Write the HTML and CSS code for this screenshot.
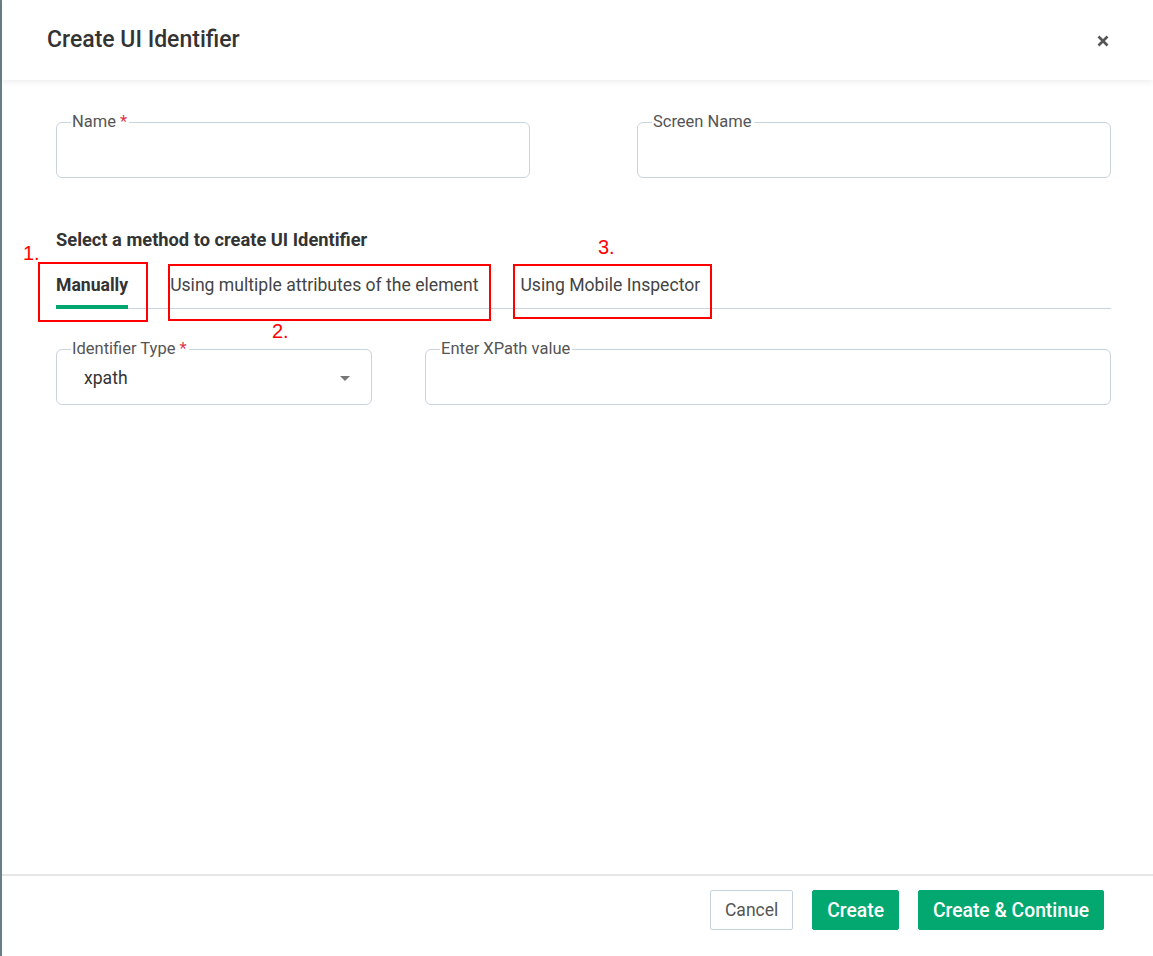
FILE: index.html
```html
<!DOCTYPE html>
<html lang="en">
<head>
<meta charset="utf-8">
<title>Create UI Identifier</title>
<link rel="stylesheet" href="styles.css">
</head>
<body>
<div class="page">
  <div class="edge"></div>
  <div class="dialog">
    <header class="dialog-header">
      <h1 class="dialog-title">Create UI Identifier</h1>
      <button class="close-btn" aria-label="Close">
        <svg width="12" height="12" viewBox="0 0 12 12"><path d="M1.5 1.5L10.5 10.5M10.5 1.5L1.5 10.5" stroke="#555" stroke-width="2.6" stroke-linecap="butt"/></svg>
      </button>
    </header>
    <main class="dialog-body">
      <div class="row row-top">
        <fieldset class="field">
          <legend class="field-label">Name <span class="req">*</span></legend>
          <div class="field-input"></div>
        </fieldset>
        <fieldset class="field">
          <legend class="field-label">Screen Name</legend>
          <div class="field-input"></div>
        </fieldset>
      </div>
      <h2 class="section-title">Select a method to create UI Identifier</h2>
      <nav class="tabs">
        <div class="tab tab-active">Manually</div>
        <div class="tab">Using multiple attributes of the element</div>
        <div class="tab">Using Mobile Inspector</div>
      </nav>
      <div class="row row-method">
        <fieldset class="field">
          <legend class="field-label">Identifier Type <span class="req">*</span></legend>
          <div class="field-input select">
            <span class="select-value">xpath</span>
            <span class="caret"></span>
          </div>
        </fieldset>
        <fieldset class="field">
          <legend class="field-label">Enter XPath value</legend>
          <div class="field-input"></div>
        </fieldset>
      </div>
    </main>
    <footer class="dialog-footer">
      <button class="btn btn-outline">Cancel</button>
      <button class="btn btn-primary">Create</button>
      <button class="btn btn-primary">Create &amp; Continue</button>
    </footer>
  </div>
  <div class="annotations">
    <div class="mark box1"></div>
    <div class="mark box2"></div>
    <div class="mark box3"></div>
    <span class="num num1">1.</span>
    <span class="num num2">2.</span>
    <span class="num num3">3.</span>
  </div>
</div>
</body>
</html>
```

FILE: styles.css
```css
* { box-sizing: border-box; }
html, body { margin: 0; padding: 0; background: #fff; }
body {
  font-family: Roboto, "Liberation Sans", sans-serif;
  color: #333;
}
.page {
  position: relative;
  display: flex;
  width: 1153px;
  height: 956px;
  overflow: hidden;
}
.edge {
  width: 2px;
  flex: none;
  background: #687f85;
}
.dialog {
  flex: 1;
  display: flex;
  flex-direction: column;
  background: #fff;
}
.dialog-header {
  height: 80px;
  flex: none;
  display: flex;
  align-items: center;
  justify-content: space-between;
  padding: 0 44px 0 45px;
  box-shadow: 0 2px 6px rgba(0, 0, 0, 0.07);
  position: relative;
  z-index: 1;
}
.dialog-title {
  margin: 0;
  font-size: 23px;
  font-weight: 500;
  color: #333;
  line-height: 26px;
  padding-bottom: 1px;
}
.close-btn {
  border: 0;
  background: none;
  padding: 0;
  width: 12px;
  height: 12px;
  display: flex;
  margin-top: 2px;
}
.dialog-body {
  flex: 1;
  padding: 0 42px 0 54px;
}
.row {
  display: grid;
}
.row-top {
  grid-template-columns: 1fr 1fr;
  column-gap: 107px;
  margin-top: 33px;
}
.row-method {
  grid-template-columns: 316px 1fr;
  column-gap: 53px;
  margin-top: 31px;
}
.field {
  margin: 0;
  border: 1px solid #c9d4dd;
  border-radius: 6px;
  padding: 0 14px;
  min-width: 0;
}
.field-label {
  font-size: 16.5px;
  line-height: 18px;
  color: #555;
  padding: 0 2px 0 1px;
  margin-left: 0;
}
.req { color: #e0364a; }
.field-input {
  height: 46px;
}
.select {
  display: flex;
  align-items: center;
  justify-content: space-between;
  padding: 0 7px 6px 13px;
}
.select-value {
  font-size: 17.6px;
  color: #333;
}
.caret {
  width: 0;
  height: 0;
  border-left: 5px solid transparent;
  border-right: 5px solid transparent;
  border-top: 5px solid #777;
  margin-top: 1px;
}
.section-title {
  margin: 51px 0 0;
  font-size: 18.3px;
  line-height: 21px;
  font-weight: 700;
  color: #333;
}
.tabs {
  display: flex;
  gap: 42px;
  margin-top: 25px;
  border-bottom: 1px solid #c9d4dd;
}
.tab {
  font-size: 17.6px;
  line-height: 21px;
  color: #444;
  padding-bottom: 12px;
}
.tab-active {
  font-weight: 700;
  color: #333;
  padding-bottom: 8px;
  border-bottom: 4px solid #04a670;
  margin-bottom: -1px;
}
.dialog-footer {
  flex: none;
  border-top: 2px solid #e6e6e6;
  display: flex;
  justify-content: flex-end;
  gap: 19px;
  padding: 14px 49px 26px 0;
}
.btn {
  height: 40px;
  padding: 0 14px;
  font-family: inherit;
  font-size: 17.5px;
  border-radius: 2px;
  cursor: pointer;
}
.btn-outline {
  background: #fff;
  border: 1px solid #c6d3de;
  color: #555;
}
.btn-primary {
  background: #03a870;
  border: 1px solid #03a870;
  color: #fff;
  font-weight: 500;
  font-size: 19.3px;
}
.annotations {
  position: absolute;
  inset: 0;
  pointer-events: none;
}
.mark {
  position: absolute;
  border: 2px solid #f00;
}
.box1 { left: 38px; top: 262px; width: 110px; height: 60px; }
.box2 { left: 168px; top: 264px; width: 323px; height: 57px; }
.box3 { left: 513px; top: 264px; width: 199px; height: 55px; }
.num {
  position: absolute;
  font-family: "Liberation Sans", Arial, sans-serif;
  font-size: 20px;
  line-height: 20px;
  color: #f00;
}
.num1 { left: 23px; top: 243px; }
.num2 { left: 272px; top: 321px; }
.num3 { left: 598px; top: 237px; }
```
